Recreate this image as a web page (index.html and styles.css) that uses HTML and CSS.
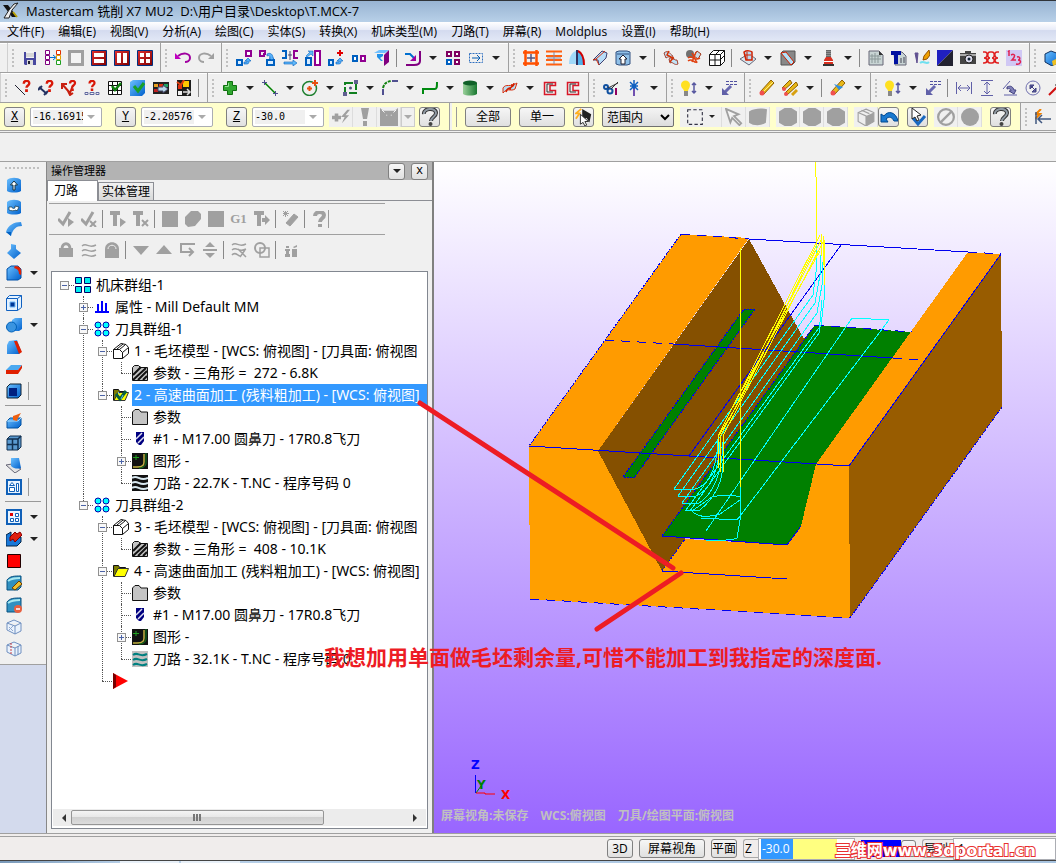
FILE: index.html
```html
<!DOCTYPE html>
<html lang="zh-CN">
<head>
    <meta charset="UTF-8">
    <meta name="viewport" content="width=device-width, initial-scale=1.0">
    <title>Mastercam 铣削 X7 MU2</title>
    <link rel="stylesheet" href="styles.css">
</head>
<body>
    <!-- Icon sprite, 16x16 grid -->
    <svg class="sprite" aria-hidden="true">
        <defs>
            <linearGradient id="g-blue" x1="0" y1="0" x2="1" y2="1"><stop offset="0" stop-color="#6cc0ff"/><stop offset="1" stop-color="#0060cc"/></linearGradient>
            <linearGradient id="g-green" x1="0" x2="1"><stop offset="0" stop-color="#9ad09a"/><stop offset="1" stop-color="#187830"/></linearGradient>
            <linearGradient id="g-red" x1="0" y1="0" x2="1" y2="1"><stop offset="0" stop-color="#e03030"/><stop offset="1" stop-color="#800000"/></linearGradient>
        </defs>
        <symbol id="app" viewBox="0 0 18 18"><path d="M1 3h5l9 12h-5z" fill="#111"/><path d="M16 1l-6 7-3 8H2l5-8 5-6z" fill="#eee" stroke="#222"/><path d="M11 10l4 5" stroke="#b8a000" stroke-width="2"/></symbol>
        <symbol id="save" viewBox="0 0 16 16"><path d="M2 2h12v13H3l-1-1z" fill="#4848a0"/><path d="M4 1h8v7H4z" fill="#f4f4f4"/><path d="M4 4h8M4 6h8" stroke="#bbb"/><path d="M5 10h6v5H5z" fill="#ddd"/><path d="M6 11h2v3H6z" fill="#223"/></symbol>
        <symbol id="map" viewBox="0 0 16 16"><path d="M.5.5h4v4h-4zM.5 5.500h4v4h-4zM.5 10.500h4v4h-4z" fill="#fff" stroke="#800080"/><path d="M11.500.5h4v4h-4z" fill="#fff" stroke="#e03000"/><path d="M11.500 5.500h4v4h-4z" fill="#fff" stroke="#e0a000"/><path d="M11.500 10.500h4v4h-4z" fill="#fff" stroke="#20a020"/><path d="M5 7.500h5M8 5l3 2.500L8 10" fill="none" stroke="#0070d0"/></symbol>
        <symbol id="win0" viewBox="0 0 16 16"><path d="M1.500 1.500h13v13h-13z" fill="#f4f4f4" stroke="#a0a0a0" stroke-width="3"/></symbol>
        <symbol id="win1" viewBox="0 0 16 16"><path d="M.5.5h15v15H.5z" fill="url(#g-red)" stroke="#003080"/><path d="M3 3h10v4H3zM3 9h10v4H3z" fill="#fff"/></symbol>
        <symbol id="win2" viewBox="0 0 16 16"><path d="M.5.5h15v15H.5z" fill="url(#g-red)" stroke="#003080"/><path d="M3 3h4v10H3zM9 3h4v10H9z" fill="#fff"/></symbol>
        <symbol id="win4" viewBox="0 0 16 16"><path d="M.5.5h15v15H.5z" fill="url(#g-red)" stroke="#003080"/><path d="M3 3h4v4H3zM9 3h4v4H9zM3 9h4v4H3zM9 9h4v4H9z" fill="#fff"/></symbol>
        <symbol id="undo" viewBox="0 0 16 16"><path d="M3 6c5-4 12-3 12 2 0 3-3 4-5 4" fill="none" stroke="#a000a0" stroke-width="2"/><path d="M0 3v6h6z" fill="#c000c0"/></symbol>
        <symbol id="redo" viewBox="0 0 16 16"><path d="M13 6C8 2 1 3 1 8c0 3 3 4 5 4" fill="none" stroke="#a0a0a0" stroke-width="2"/><path d="M16 3v6h-6z" fill="#a0a0a0"/></symbol>
        <symbol id="x-move" viewBox="0 0 16 16"><path d="M1 10h5v5H1z" fill="#d8ecff" stroke="#0060c0" stroke-width="2"/><path d="M10 1h5v5h-5z" fill="#fff" stroke="#900090" stroke-width="2"/><path d="M8 14h3c2 0 2-2 2-3h2l-3-3-3 3h2v1H8z" fill="#58b0f8" stroke="#0060c0" stroke-width=".6"/></symbol>
        <symbol id="x-copy" viewBox="0 0 16 16"><path d="M6 6H1V1h5v3H4" fill="none" stroke="#900090" stroke-width="2"/><path d="M8 10h7v5H8z" fill="#d8ecff" stroke="#0060c0" stroke-width="2"/><path d="M8 4c4-2 6 1 6 4h1l-2 2-3-2h1c0-2-1-3-3-2z" fill="#58b0f8" stroke="#0060c0" stroke-width=".6"/></symbol>
        <symbol id="x-mirror" viewBox="0 0 16 16"><path d="M0 1h4v7H0" fill="none" stroke="#0060c0" stroke-width="2"/><path d="M16 1h-4v7h4" fill="none" stroke="#900090" stroke-width="2"/><path d="M8 1v9M6 5h4" stroke="#446"/><path d="M2 12h9v-2l4 3-4 3v-2H2z" fill="#60b8f8" stroke="#0060c0" stroke-width=".6"/></symbol>
        <symbol id="x-scale" viewBox="0 0 16 16"><path d="M1 8h5v7H1z" fill="#d8ecff" stroke="#0060c0" stroke-width="2"/><path d="M10 1h5v14h-5z" fill="#fff" stroke="#900090" stroke-width="2"/><path d="M1 6l4-4-2-1h5v5L6 4 2 7z" fill="#60b8f8" stroke="#0060c0" stroke-width=".5"/></symbol>
        <symbol id="x-off" viewBox="0 0 16 16"><path d="M1 10h4v5H1z" fill="#d8ecff" stroke="#0060c0" stroke-width="2"/><path d="M12 0v6M9 3h6" stroke="#e00000" stroke-width="2"/><path d="M8 14h3c2 0 2-2 2-3h2l-3-3-3 3h2v1H8z" fill="#58b0f8" stroke="#0060c0" stroke-width=".6"/></symbol>
        <symbol id="x-two" viewBox="0 0 16 16"><path d="M2 6h4v5H2z" fill="#fff" stroke="#0060c0" stroke-width="2"/><path d="M10 6h4v5h-4z" fill="#fff" stroke="#900090" stroke-width="2"/></symbol>
        <symbol id="x-proj" viewBox="0 0 16 16"><path d="M0 3l5-3h10l-4 3z" fill="#70c0ff"/><path d="M10 5l5-5v12l-5 4z" fill="#800080"/><path d="M3 4h6v2L6 8l3 3H7L3 7z" fill="#2090e8"/></symbol>
        <symbol id="x-roll" viewBox="0 0 16 16"><path d="M15 1v10c0 4-4 4-6 4H1" fill="none" stroke="#800080" stroke-width="2"/><path d="M0 4h5l5 5" fill="none" stroke="#0070d0" stroke-width="2"/><path d="M11 5v6H5z" fill="#a000a0"/></symbol>
        <symbol id="x-array" viewBox="0 0 16 16"><path d="M2 2h4v4H2zM10 2h4v4h-4zM10 10h4v4h-4z" fill="#fff" stroke="#800060" stroke-width="2"/><path d="M2 10h4v4H2z" fill="#fff" stroke="#0060c0" stroke-width="2"/></symbol>
        <symbol id="x-drag" viewBox="0 0 16 16"><path d="M1.500 3.500h13v9h-13z" fill="none" stroke="#3070c0" stroke-dasharray="2 1"/><path d="M4 8h8M9 5l3 3-3 3" fill="none" stroke="#0058b0"/></symbol>
        <symbol id="grid-o" viewBox="0 0 16 16"><path d="M2.500 0v16M13.500 0v16M0 2.500h16M0 13.500h16" stroke="#ff5000" stroke-width="2.500"/><path d="M8 4v8M4 8h8" stroke="#555580" stroke-width="1.500"/></symbol>
        <symbol id="rows-o" viewBox="0 0 16 16"><path d="M0 1.500h16M0 6h16M0 10h16M0 14.500h16" stroke="#ff6010" stroke-width="2"/><path d="M8 2v12M1 8h14" stroke="#8888a0"/></symbol>
        <symbol id="revolve" viewBox="0 0 16 16"><path d="M7 1v13H0C0 7 3 2 7 1z" fill="#a0d8f8"/><path d="M9 1c4 2 6 7 6 14H9z" fill="#50b0e8"/><path d="M9 1c4 2 6 7 6 14" fill="none" stroke="#d00000" stroke-width="2"/><path d="M8 0v15" stroke="#303060" stroke-width="2"/></symbol>
        <symbol id="sweep" viewBox="0 0 16 16"><path d="M1 10L10 1l5 2-1 5-7 7-1-5z" fill="#b8ddf8" stroke="#404070"/><path d="M1 10l3-1 3 6M4 9l9-8" fill="none" stroke="#d03010"/></symbol>
        <symbol id="draft" viewBox="0 0 16 16"><path d="M1 2l3-1h8l3 1v12l-3 1H4l-3-1z" fill="#90c0e8" stroke="#305080"/><path d="M2 4h12" stroke="#305080"/><path d="M6 14V9H4l4-4 4 4h-2v5z" fill="#fff" stroke="#223"/></symbol>
        <symbol id="flow" viewBox="0 0 16 16"><path d="M1 3c5-4 6 2 8 2l2 4c-3 0-4-4-8-1zM6 9c4-3 5 2 8 1l1 4c-4 2-5-3-8-1z" fill="#c0e4f8" stroke="#a04030"/><path d="M6 1l-2 4 6 3-3 4" fill="none" stroke="#d83000" stroke-width="1.500"/></symbol>
        <symbol id="flow2" viewBox="0 0 16 16"><circle cx="4" cy="4" r="4" fill="#707070"/><path d="M11 1l4 3-3 5-4-3z" fill="#c8dce8" stroke="#a03010"/><path d="M2 8c5-4 5 4 12 0M2 11c5-4 6 4 9 0M6 3l5 10M10 2l-4 10" fill="none" stroke="#e04010" stroke-width="1.500"/></symbol>
        <symbol id="wirebox" viewBox="0 0 16 16"><path d="M.5 4.500h11v11H.5zM.5 4.500l4-4h11v11l-4 4M11.500 4.500l4-4M6 5v10M1 10h10M6 5l4-4M11 10l4-4" fill="#fff" stroke="#111"/></symbol>
        <symbol id="trim" viewBox="0 0 16 16"><path d="M0 9l5-3h7l4 3-7 6z" fill="#d8e8f0" stroke="#667"/><path d="M4 2c3-2 7-1 8 0v8H6z" fill="#b8d8f0" stroke="#d02000" stroke-width="1.500"/><path d="M5 5h6M7 2v8" stroke="#d02000"/></symbol>
        <symbol id="slice" viewBox="0 0 16 16"><path d="M1 3l2-2h12v11l-3 3H1z" fill="#888" stroke="#555"/><path d="M1 3l5-1 8 10-3 3z" fill="#b0e0f8" stroke="#d02000"/></symbol>
        <symbol id="tower" viewBox="0 0 16 16"><path d="M6 0h5v7H6z" fill="#666"/><path d="M6 1.500h5M6 3.500h5M6 5.500h5" stroke="#bbb" stroke-width=".5"/><path d="M6 7h5l2 3v5H4v-5z" fill="#d83020"/><path d="M4 11.500h9" stroke="#fff"/><path d="M3 15h11" stroke="#333" stroke-width="2"/></symbol>
        <symbol id="doc" viewBox="0 0 16 16"><path d="M1 1h10l4 4v10H1z" fill="#c8d4d4" stroke="#667"/><path d="M4 4v9M7 3v10M10 5v8M2 6h11M2 9h11" stroke="#8a9898"/><path d="M11 1v4h4z" fill="#333"/></symbol>
        <symbol id="doc-t" viewBox="0 0 16 16"><path d="M3 2h8l4 4v9H4z" fill="#c8d4d4" stroke="#667"/><path d="M0 1h10v4H7v9H3V5H0z" fill="#0010a0"/><path d="M10 8v5M13 7v6" stroke="#445"/></symbol>
        <symbol id="pens" viewBox="0 0 16 16"><path d="M1 3h3l-1 10z" fill="#605090" stroke="#605090"/><path d="M15 0l-5 6-1 4 4-1 3-4z" fill="#f0a000" stroke="#905000"/><path d="M6 13c4-3 6 2 9-1" fill="none" stroke="#70e0f0" stroke-width="2"/></symbol>
        <symbol id="shade" viewBox="0 0 16 16"><path d="M0 0h16L0 16z" fill="#2020c0"/><path d="M16 0v16H0z" fill="#222230"/></symbol>
        <symbol id="camera" viewBox="0 0 16 16"><path d="M0 3h5V1h6v2h5v11H0z" fill="#444"/><path d="M0 4h16v2H0z" fill="#aaa"/><circle cx="9" cy="9" r="4" fill="#dde" stroke="#222"/><circle cx="9" cy="9" r="1.500" fill="#123"/></symbol>
        <symbol id="coils" viewBox="0 0 16 16"><path d="M0 2h2c3 0 3 6-1 6 4 0 4 5 0 5H0M7 2C4 2 4 8 7 8c-3 0-3 5 0 5h2c3 0 3-5 0-5 3 0 3-6 0-6zM16 2h-2c-3 0-3 6 1 6-4 0-4 5 0 5h1" fill="none" stroke="#e02020" stroke-width="1.500"/></symbol>
        <symbol id="nums" viewBox="0 0 16 16"><path d="M0 0h16v16H0z" fill="#d0c8f4"/><path d="M2 2l1-1v5M5 5c4-2 5 1 1 5h4M11 7c4-1 3 3 1 3 4 0 3 5-2 4" fill="none" stroke="#e02050" stroke-width="1.500"/></symbol>
        <symbol id="cube-b" viewBox="0 0 16 16"><path d="M1 4l6-3 8 3v8l-7 4-7-4z" fill="url(#g-blue)" stroke="#103060"/><path d="M8 11l6-3 2 4-7 4z" fill="#f0c020"/></symbol>

        <symbol id="q" viewBox="0 0 9 13"><path d="M1.500 4C1.500 0 7.500 0 7.500 3.500 7.500 6 4.500 6 4.500 8.500" fill="none" stroke="#d81808" stroke-width="2.600"/><path d="M3 10h3v3H3z" fill="#d81808"/></symbol>
        <symbol id="a-line" viewBox="0 0 16 16"><path d="M0 5l10 10" stroke="#223"/><use href="#q" x="7" width="9" height="12"/></symbol>
        <symbol id="a-dist" viewBox="0 0 16 16"><path d="M1 7l8 7M0 10l4-4M6 15l4-4" stroke="#223060" stroke-width="2"/><use href="#q" x="7" width="9" height="12"/></symbol>
        <symbol id="a-ang" viewBox="0 0 16 16"><path d="M1 4l8 9 3-8M1 9V4h5M7 11l2 4 3-2" fill="none" stroke="#c82010" stroke-width="2"/><use href="#q" x="7" width="9" height="11"/></symbol>
        <symbol id="a-chain" viewBox="0 0 16 16"><use href="#q" x="4" width="8" height="11"/><path d="M1 12.500h3v2H1zM6 12.500h4v2H6zM12 12.500h3v2h-3z" fill="none" stroke="#6068a0"/></symbol>
        <symbol id="a-grid" viewBox="0 0 16 16"><path d="M1.500 1.500h13v13h-13z" fill="#fff" stroke="#111"/><path d="M1 5.500h14M1 10.500h14M5.500 1v14M10.500 1v14" stroke="#111"/><path d="M5 6l3 4 6-7" fill="none" stroke="#108010" stroke-width="2.500"/></symbol>
        <symbol id="a-check" viewBox="0 0 16 16"><path d="M0 2l3-2h12v13l-3 3H0z" fill="url(#g-blue)"/><path d="M4 6l4 5 6-8" fill="none" stroke="#18a028" stroke-width="3"/></symbol>
        <symbol id="a-list" viewBox="0 0 16 16"><path d="M0 2h16v12H0z" fill="#222"/><path d="M1 4h4v3H1z" fill="#e8a020"/><path d="M6 4h4v3H6z" fill="#e03010"/><path d="M11 4h4v3h-4z" fill="#20a060"/><path d="M1 9h4v3H1z" fill="#c02020"/><path d="M5 7h5V5l5 4-5 4v-2H5z" fill="#b8d8e8" stroke="#446"/></symbol>
        <symbol id="a-sort" viewBox="0 0 16 16"><path d="M1 0h14v16H1z" fill="#1c1c1c"/><path d="M2 5h4v4H2z" fill="#e03010"/><path d="M7 1h6v6H7z" fill="#ffc800"/><path d="M2 11h4v4H2z" fill="#f0f0f0"/><path d="M1 2l4 3 3-5" fill="none" stroke="#e04010" stroke-width="2"/><path d="M7 12h6M11 9l3 3-3 3" fill="none" stroke="#ddd" stroke-width="1.500"/></symbol>
        <symbol id="point" viewBox="0 0 16 16"><path d="M5.500 1.500h5v4h4v5h-4v4h-5v-4h-4v-5h4z" fill="#30a830" stroke="#107010"/><path d="M6.500 3v3.500H3" fill="none" stroke="#90e090"/></symbol>
        <symbol id="line" viewBox="0 0 16 16"><path d="M3 3l10 10" stroke="#008000" stroke-width="1.500"/><path d="M0 2.500h5M2.500 0v5M11 13.500h5M13.500 11v5" stroke="#505090"/></symbol>
        <symbol id="circle" viewBox="0 0 16 16"><circle cx="7.500" cy="8.500" r="7" fill="none" stroke="#208030" stroke-width="1.500"/><path d="M7.500 6v5M5 8.500h5M13 0v6M10 3h6" stroke="#e85010" stroke-width="2"/></symbol>
        <symbol id="rect" viewBox="0 0 16 16"><path d="M3 3h11v10H3z" fill="none" stroke="#108020" stroke-width="2" stroke-dasharray="8 2"/><circle cx="8.500" cy="8" r="1.500" fill="#505080"/><path d="M12 0h4v4h-4zM1 12h4v4H1z" fill="#606090"/></symbol>
        <symbol id="fillet" viewBox="0 0 16 16"><path d="M1 15V9" stroke="#505090" stroke-width="2"/><path d="M1 8c1-4 3-6 8-7" fill="none" stroke="#108010" stroke-width="2" stroke-dasharray="3 1"/><path d="M10 1h6" stroke="#505090" stroke-width="2"/></symbol>
        <symbol id="spline" viewBox="0 0 16 16"><path d="M1 14V9h12c2 0 2-2 2-7" fill="none" stroke="#008a10" stroke-width="2"/></symbol>
        <symbol id="cyl" viewBox="0 0 16 16"><path d="M1 3h14v11c-3 2-11 2-14 0z" fill="url(#g-green)"/><ellipse cx="8" cy="3" rx="7" ry="2.500" fill="#106028"/></symbol>
        <symbol id="surf" viewBox="0 0 16 16"><path d="M1 8c3-5 7 0 14-5l-2 6c-5 3-7-2-12 4z" fill="#b8ddf0" stroke="#d83010"/><path d="M4 12c2-7 6-1 6-8M8 10c0-5 4-2 4-7" fill="none" stroke="#d02000" stroke-width="1.500"/></symbol>
        <symbol id="toolc" viewBox="0 0 16 16"><path d="M2.500 2.500h11v3H8v5h5.500v4h-11z" fill="#eee" stroke="#d81828" stroke-width="1.500"/><path d="M11 4H5v8h6" fill="none" stroke="#333"/></symbol>
        <symbol id="dyn" viewBox="0 0 16 16"><circle cx="3" cy="7" r="2" fill="none" stroke="#1050a0" stroke-width="2"/><circle cx="7" cy="11" r="2.500" fill="none" stroke="#1050a0" stroke-width="2"/><path d="M5 8l10-5M8 9l7-7" stroke="#333"/><path d="M13 8v7" stroke="#900060" stroke-width="2"/></symbol>
        <symbol id="axis" viewBox="0 0 16 16"><path d="M8 8v8" stroke="#7050b0" stroke-width="2"/><path d="M8 0v9M4 2l8 8M12 2l-8 8M4 6h8" stroke="#1060c0" stroke-width="1.500"/></symbol>
        <symbol id="bulb" viewBox="0 0 16 16"><path d="M0 5c0-6 9-6 9 0 0 3-2 4-2 6H3c0-2-3-3-3-6z" fill="#ffe020"/><path d="M3 11h4v5H3z" fill="#888"/><path d="M13 3v10M11 5l2-2 2 2M11 11l2 2 2-2" fill="none" stroke="#5858a0" stroke-width="1.500"/></symbol>
        <symbol id="attr" viewBox="0 0 16 16"><path d="M5 1.500h11M5 4.500h11" stroke="#5050a0" stroke-dasharray="3 1"/><path d="M10 6l-6 6" stroke="#6868b0" stroke-width="3"/><path d="M1 8v7h7z" fill="#6060a8"/></symbol>
        <symbol id="pencil" viewBox="0 0 16 16"><path d="M2 11L12 0l3 3L5 14z" fill="#e8b818" stroke="#906000"/><path d="M4 12L14 2" stroke="#fff080"/><circle cx="3" cy="13" r="2.500" fill="#f05050"/></symbol>
        <symbol id="pencils" viewBox="0 0 16 16"><path d="M0 8L8 0l2 3-8 7zM3 13L14 2l2 3L5 15z" fill="#e8b818" stroke="#906000"/><circle cx="2" cy="9" r="2" fill="#f05050"/><circle cx="4" cy="14" r="2" fill="#f05050"/><path d="M10 15l5-5" stroke="#d8a010" stroke-width="3"/></symbol>
        <symbol id="pencil-b" viewBox="0 0 16 16"><path d="M2 11L12 0l3 3L5 14z" fill="#e8b818" stroke="#906000"/><path d="M4 4l9 3-4 3z" fill="#3090e0"/><circle cx="3" cy="13" r="2.500" fill="#f05050"/></symbol>
        <symbol id="dim-h" viewBox="0 0 16 16"><path d="M.5 2v12M15.500 2v12M2 8h12M5 5L2 8l3 3M11 5l3 3-3 3" fill="none" stroke="#6060a8"/></symbol>
        <symbol id="dim-v" viewBox="0 0 16 16"><path d="M2 .5h12M2 15.500h12M8 2v12M5 5l3-3 3 3M5 11l3 3 3-3" fill="none" stroke="#6060a8"/></symbol>
        <symbol id="dim-a" viewBox="0 0 16 16"><path d="M1 9l7-8M2 15h13" stroke="#6060a8"/><path d="M5 7c4-2 6 0 7 3h2l-2 4-5-3h2c0-2-2-3-4-2z" fill="#8080b8" stroke="#404080"/></symbol>
        <symbol id="dim-c" viewBox="0 0 16 16"><circle cx="8" cy="8" r="7" fill="none" stroke="#7070b0"/><path d="M5 5h4L5 9zM11 12H7l4-4zM6 6l5 5" fill="#6060a0" stroke="#404080"/></symbol>
        <symbol id="dim-p" viewBox="0 0 16 16"><path d="M1 15L10 6" stroke="#d01010" stroke-width="2"/><path d="M11 1v8M7 5h8" stroke="#222"/></symbol>

        <symbol id="plusbolt" viewBox="0 0 20 16"><path d="M5 4v9M0 8.500h10" stroke="#a0a0a0" stroke-width="4"/><path d="M17 0l-7 8h4l-3 7 8-9h-4l5-6z" fill="#a0a0a0"/></symbol>
        <symbol id="bang" viewBox="0 0 16 18"><path d="M4 0h8l-2 11H6zM6 13h4v5H6z" fill="#a0a0a0"/></symbol>
        <symbol id="face" viewBox="0 0 20 20"><path d="M0 0l4 3h12l4-3v20H0z" fill="#a0a0a0"/><path d="M7 8h1M12 8h1M2 2l3 3M18 2l-3 3" stroke="#fff"/></symbol>
        <symbol id="help" viewBox="0 0 16 18"><path d="M2 6C1 0 14-1 14 5c0 4-5 4-5 8" fill="none" stroke="#333" stroke-width="4"/><path d="M2 6C1 0 14-1 14 5c0 4-5 4-5 8" fill="none" stroke="#909aa4" stroke-width="2"/><circle cx="8.500" cy="16" r="2" fill="#444"/></symbol>
        <symbol id="pick" viewBox="0 0 20 18"><path d="M8 0l10 6-2 9-3-5-5 2z" fill="#222"/><path d="M7 0L1 5h4L1 11" fill="none" stroke="#ffb020" stroke-width="2"/><path d="M6 6l9 8h-4l2 4-2 1-2-4-3 2z" fill="#fff" stroke="#222"/></symbol>
        <symbol id="marq" viewBox="0 0 16 16"><path d="M1.500 1.500h13v13h-13z" fill="none" stroke="#334" stroke-dasharray="3 2"/></symbol>
        <symbol id="arrow-g" viewBox="0 0 20 18"><path d="M1 0l14 6-5 2 8 8-2 2-8-8-2 5z" fill="#f4f4f4" stroke="#a0a0a0" stroke-width="2"/></symbol>
        <symbol id="blob" viewBox="0 0 16 16"><path d="M0 3c5-3 11-3 16-2l-1 12c-4 3-11 3-15 0z" fill="#a0a0a0"/></symbol>
        <symbol id="hex" viewBox="0 0 16 16"><path d="M5 0h6l5 3v10l-5 3H5l-5-3V3z" fill="#a0a0a0"/></symbol>
        <symbol id="cube-g" viewBox="0 0 16 16"><path d="M8 1l7 3v8l-7 4-7-4V4z" fill="#eee" stroke="#a0a0a0"/><path d="M8 7l7-3v8l-7 4z" fill="#a0a0a0"/><path d="M1 4l7 3v9M4 2l7 3" fill="none" stroke="#a0a0a0"/></symbol>
        <symbol id="turn" viewBox="0 0 18 16"><path d="M1 5v8h7l-2-3c3-3 6-2 8 2h4C16 3 8 1 4 7z" fill="#1878d0" stroke="#004890"/></symbol>
        <symbol id="verify" viewBox="0 0 18 18"><path d="M4 10l5 6 7-8" fill="none" stroke="#1868c0" stroke-width="3"/><path d="M3 0l9 7-4 1 2 4-2 1-2-4-3 2z" fill="#fff" stroke="#222"/></symbol>
        <symbol id="ban" viewBox="0 0 16 16"><circle cx="8" cy="8" r="7" fill="none" stroke="#a0a0a0" stroke-width="2"/><path d="M3 13L13 3" stroke="#a0a0a0" stroke-width="2"/></symbol>
        <symbol id="disc" viewBox="0 0 18 18"><circle cx="9" cy="9" r="9" fill="#a0a0a0"/></symbol>
        <symbol id="bolt-dim" viewBox="0 0 16 16"><path d="M6 0L1 5h4L0 10" fill="none" stroke="#f08000" stroke-width="2"/><path d="M1 3v12M3 10h13M7 6l-4 4 4 4" fill="none" stroke="#405880" stroke-width="1.500"/></symbol>

        <symbol id="s-ext" viewBox="0 0 16 16"><path d="M1 3c3-3 11-3 14 0v11c-3 2-11 2-14 0z" fill="url(#g-blue)"/><path d="M7 13V8H4.500L8 4l3.500 4H9v5z" fill="#fff" stroke="#134"/></symbol>
        <symbol id="s-rev" viewBox="0 0 16 16"><path d="M1 3c3-3 11-3 14 0v11c-3 2-11 2-14 0z" fill="url(#g-blue)"/><path d="M3 8v3c2 1 5 1 7 0l1 1 2-4-4-1v2c-2 1-3 0-3-1z" fill="#fff" stroke="#134" stroke-width=".7"/></symbol>
        <symbol id="s-swp" viewBox="0 0 16 16"><path d="M0 11C2 4 8 1 15 1l1 4C10 5 7 8 5 15z" fill="url(#g-blue)"/><path d="M0 11h5v4z" fill="#0060c0"/></symbol>
        <symbol id="s-loft" viewBox="0 0 16 16"><path d="M5 1l5 1v4l5 4-7 6-7-6 4-4z" fill="url(#g-blue)"/></symbol>
        <symbol id="s-fil" viewBox="0 0 16 16"><path d="M1 4l4-3h7l3 3v9l-3 2H1z" fill="url(#g-blue)" stroke="#0050a8"/><path d="M9 1c5 0 7 3 6 9l-2-1c0-3-1-5-5-6z" fill="#e02000"/></symbol>
        <symbol id="s-shell" viewBox="0 0 16 16"><path d="M.5 3.500h11v12H.5zM.5 3.500l3-3h12v12l-4 3M11.500 3.500l4-3" fill="#e4f2ff" stroke="#1060c0"/><path d="M4 7h5v5H4z" fill="#003898" stroke="#70b8f8"/></symbol>
        <symbol id="s-bool" viewBox="0 0 16 16"><path d="M6 3l3-2h7v11l-3 2H6z" fill="url(#g-blue)"/><circle cx="5.500" cy="10" r="5" fill="#3a94e0" stroke="#0060b8"/></symbol>
        <symbol id="s-draft" viewBox="0 0 16 16"><path d="M3 2l8-1 4 11-2 3H1V6z" fill="url(#g-blue)"/><path d="M8 2h3l5 11-3 2z" fill="#e02000"/></symbol>
        <symbol id="s-thick" viewBox="0 0 16 16"><path d="M5 4h11l-4 5H0z" fill="#4aa8f0"/><path d="M0 9h12l4-5v3l-4 6H0z" fill="#e02000"/></symbol>
        <symbol id="s-solid" viewBox="0 0 16 16"><path d="M1 4l3-3h11v11l-3 3H1z" fill="url(#g-blue)" stroke="#123"/><path d="M3 5h8v8H3z" fill="#002080"/></symbol>
        <symbol id="s-imp" viewBox="0 0 16 16"><path d="M1 8l3-3h11v7l-3 3H1z" fill="url(#g-blue)" stroke="#0050a0"/><path d="M1 8h11l3-3" fill="none" stroke="#a8dcff"/><path d="M7 7V3l3-1 5-2-3 5-1 3z" fill="#f06010"/></symbol>
        <symbol id="s-grid" viewBox="0 0 16 16"><path d="M1 4l3-3h11v11l-3 3H1z" fill="#5a9ad0" stroke="#123050"/><path d="M1 4h11v11M12 4l3-3M6.500 4v11M1 9.500h11" fill="none" stroke="#123050" stroke-width="1.500"/></symbol>
        <symbol id="s-bend" viewBox="0 0 16 16"><path d="M0 8l6-1 9 5-6 4z" fill="#e4e4e4" stroke="#667"/><path d="M5 1h8l2 10c-3 1-7 1-10-2z" fill="url(#g-blue)"/></symbol>
        <symbol id="s-lay" viewBox="0 0 16 16"><path d="M1 1h14v14H1z" fill="#e8f4ff" stroke="#1060b8" stroke-width="2"/><path d="M3.500 6.500l2.500-3 2.500 3zM3.500 8.500h5v4h-5zM10.500 4.500h2v8h-2z" fill="#fff" stroke="#1060b8"/></symbol>
        <symbol id="s-four" viewBox="0 0 16 16"><path d="M1 1h14v14H1z" fill="#e8f4ff" stroke="#1060b8" stroke-width="2"/><path d="M4 4h3v3H4z" fill="#e00000"/><path d="M9.500 4.500h3v3h-3zM4.500 9.500h3v3h-3zM9.500 9.500h3v3h-3z" fill="#fff" stroke="#1060b8"/></symbol>
        <symbol id="s-find" viewBox="0 0 16 16"><path d="M0 4l5-3v5h10v5l-4 4H0z" fill="#1878d8" stroke="#024"/><path d="M4 6l5-5 2 2 3-2 2 3-7 7-2-3-3 2z" fill="#e02010" stroke="#800"/></symbol>
        <symbol id="s-red" viewBox="0 0 16 16"><path d="M1.500 1.500h13v13h-13z" fill="#f00" stroke="#200"/></symbol>
        <symbol id="s-edit" viewBox="0 0 16 16"><path d="M1 5c3-4 7-4 14-4v11l-3 3H1z" fill="#3090c0" stroke="#065080"/><path d="M2 6c4-3 7-3 12-3" stroke="#a8e8f0" fill="none" stroke-width="2"/><path d="M6 13l7-7 3 3-7 6z" fill="#f0c030" stroke="#704000"/></symbol>
        <symbol id="s-del" viewBox="0 0 16 16"><path d="M1 5c3-4 7-4 14-4v11l-3 3H1z" fill="#3090c0" stroke="#065080"/><path d="M2 6c4-3 7-3 12-3" stroke="#a8e8f0" fill="none" stroke-width="2"/><circle cx="12" cy="12" r="4" fill="#e86040"/><path d="M10 12h4" stroke="#fff" stroke-width="1.500"/></symbol>
        <symbol id="s-wire" viewBox="0 0 16 16"><path d="M1 4l7-3 7 3v8l-6 3-8-4zM1 4l8 3 6-3M9 7v8" fill="#eaf2fc" stroke="#7090c0"/><path d="M3 8l4 4M3 11l4-4" stroke="#90a8d0"/></symbol>
        <symbol id="s-wire2" viewBox="0 0 16 16"><path d="M1 4l7-3 7 3v8l-6 3-8-4zM1 4l8 3 6-3M9 7v8M12 5v9" fill="#eaf2fc" stroke="#7090c0"/><path d="M5 2v12" stroke="#d04040" stroke-dasharray="2 1"/></symbol>

        <symbol id="p-selall" viewBox="0 0 16 16"><path d="M0 8l5 5 7-12" fill="none" stroke="currentColor" stroke-width="3"/><path d="M10 7l6 4-6 5z" fill="currentColor"/></symbol>
        <symbol id="p-selno" viewBox="0 0 16 16"><path d="M0 8l5 5 7-12" fill="none" stroke="currentColor" stroke-width="3"/><path d="M9 10l6 6M15 10l-6 6" stroke="currentColor" stroke-width="2"/></symbol>
        <symbol id="p-regen" viewBox="0 0 16 16"><path d="M0 0h10v4H7v11H3V4H0zM10 7l6 4-6 5z" fill="currentColor"/></symbol>
        <symbol id="p-regenx" viewBox="0 0 16 16"><path d="M0 0h10v4H7v11H3V4H0z" fill="currentColor"/><path d="M9 9l6 6M15 9l-6 6" stroke="currentColor" stroke-width="2"/></symbol>
        <symbol id="p-sq" viewBox="0 0 16 16"><path d="M0 0h16v16H0z" fill="currentColor"/></symbol>
        <symbol id="p-oct" viewBox="0 0 16 16"><path d="M6 0h7l3 3v5l-6 7-7 1-3-3V6z" fill="currentColor"/></symbol>
        <symbol id="p-post" viewBox="0 0 16 16"><path d="M0 0h10v4H7v11H3V4H0zM8 7h3V4l5 5-5 5v-3H8z" fill="currentColor"/></symbol>
        <symbol id="p-hf" viewBox="0 0 16 16"><path d="M3 12l8-9 4 3-8 9z" fill="currentColor" stroke="currentColor"/><path d="M0 5l5-5M0 0l5 5M2.500 0v6M0 2.500h6" stroke="currentColor"/></symbol>
        <symbol id="p-help" viewBox="0 0 16 16"><path d="M3 5C3 0 12 0 12 4c0 4-4 3-4 7" fill="none" stroke="currentColor" stroke-width="4"/><path d="M6 13h4v3H6z" fill="currentColor"/></symbol>
        <symbol id="p-lock" viewBox="0 0 16 16"><path d="M1 6h14v9H1z" fill="currentColor"/><path d="M4 7c0-7 8-7 8 0" fill="none" stroke="currentColor" stroke-width="3"/></symbol>
        <symbol id="p-wave" viewBox="0 0 16 16"><path d="M1 4c5-4 6 3 14-1M1 9c5-4 6 3 14-1M1 14c5-4 6 3 14-1" fill="none" stroke="currentColor" stroke-width="1.500"/></symbol>
        <symbol id="p-ghost" viewBox="0 0 16 16"><path d="M1 16V7c0-9 14-9 14 0v9z" fill="currentColor"/><path d="M4 7c0-5 8-5 8 0" fill="none" stroke="#eee"/></symbol>
        <symbol id="p-down" viewBox="0 0 16 16"><path d="M0 4h16l-8 9z" fill="currentColor"/></symbol>
        <symbol id="p-up" viewBox="0 0 16 16"><path d="M0 12h16L8 3z" fill="currentColor"/></symbol>
        <symbol id="p-ins" viewBox="0 0 16 16"><path d="M16 2H2v8h11M10 6l4 4-4 4" fill="none" stroke="currentColor" stroke-width="2"/></symbol>
        <symbol id="p-both" viewBox="0 0 16 16"><path d="M3 5l5-5 5 5zM3 11l5 5 5-5z" fill="currentColor"/><path d="M1 8h14" stroke="currentColor" stroke-width="2"/></symbol>
        <symbol id="p-wavex" viewBox="0 0 16 16"><path d="M1 3c5-4 6 3 14-1M1 8c5-4 6 3 14-1M1 13c3-4 6 1 8 1M7 7l8 8M14 8l-5 7" fill="none" stroke="currentColor" stroke-width="1.500"/></symbol>
        <symbol id="p-shape" viewBox="0 0 16 16"><circle cx="6" cy="6" r="5" fill="none" stroke="currentColor" stroke-width="2"/><path d="M6 6h9v9H6z" fill="none" stroke="currentColor" stroke-width="1.500"/></symbol>
        <symbol id="p-opt" viewBox="0 0 16 16"><path d="M3 7h4v2H6v3h1v3H2v-3h1V9H2V7zM9 7h5v8H9zM3 4h3v2H3zM10 5l4-2v2l-3 1z" fill="currentColor"/></symbol>

        <symbol id="t-machine" viewBox="0 0 16 16"><path d="M.5.5h6v6h-6zM9.500.5h6v6h-6zM.5 9.500h6v6h-6zM9.500 9.500h6v6h-6z" fill="#0ee" stroke="#006"/></symbol>
        <symbol id="t-prop" viewBox="0 0 16 16"><path d="M1 13h14M4 5v8M8 2v11M12 4v9" stroke="#00f" stroke-width="2"/></symbol>
        <symbol id="t-group" viewBox="0 0 16 16"><g fill="#0ff" stroke="#00a"><circle cx="4" cy="4" r="3"/><circle cx="12" cy="4" r="3"/><circle cx="4" cy="12" r="3"/><circle cx="12" cy="12" r="3"/></g></symbol>
        <symbol id="t-stock" viewBox="0 0 16 16"><path d="M.5 6.500L8 .5l5 1 2.500 3v6l-6 5H.5zM.5 6.500h6l3 3v6M6.500 6.500l6-5M9.500 9.500l6-5M4 6l6-5" fill="#fff" stroke="#111"/></symbol>
        <symbol id="t-hatch" viewBox="0 0 16 16"><path d="M.5 2.500l2-2h4l2 2h7v13H.5z" fill="#c4c4c4" stroke="#111"/><path d="M1 10l8-8M1 15L14 3M6 15l9-9M11 15l4-4" stroke="#111" stroke-width="2"/></symbol>
        <symbol id="t-folder" viewBox="0 0 16 16"><path d="M.5 13.500V2.500h5l1 2h6v3" fill="#7c7c00" stroke="#111"/><path d="M1 13.500L5 5.500h10.500L12 13.500z" fill="#ff0" stroke="#333"/></symbol>
        <symbol id="t-folderv" viewBox="0 0 16 16"><path d="M.5 13.500V2.500h5l1 2h6v3" fill="#7c7c00" stroke="#111"/><path d="M1 13.500L5 5.500h10.500L12 13.500z" fill="#ff0" stroke="#333"/><path d="M3 7l4 5 6-8" fill="none" stroke="#086040" stroke-width="3"/><path d="M5 5l2 2M10 8l-2 4" stroke="#60c0f0"/></symbol>
        <symbol id="t-param" viewBox="0 0 16 16"><path d="M.5 15.500V3L3 .5h4L9 3h6.500v12.500z" fill="#c4c4c4" stroke="#111"/></symbol>
        <symbol id="t-tool" viewBox="0 0 16 16"><path d="M4 1h8v9l-3 4H7l-3-3z" fill="#000080"/><path d="M4 8l6-6M6 12l6-6" stroke="#dde" stroke-width="1.500"/></symbol>
        <symbol id="t-geom" viewBox="0 0 16 16"><path d="M0 0h16v16H0z" fill="#111"/><path d="M12 1v8c0 3-1 5-7 5H1" fill="none" stroke="#c0b040" stroke-width="1.500"/><path d="M14 0v10c0 3-3 5-7 5" fill="none" stroke="#108020"/><path d="M4 2v5M1 4.500h6" stroke="#20a020"/></symbol>
        <symbol id="t-path" viewBox="0 0 16 16"><path d="M0 0h16v16H0z" fill="#111"/><path d="M0 3c6-4 7 4 16 0M0 8c6-4 7 4 16 0M0 13c6-4 7 4 16 0" fill="none" stroke="#d8e8f0" stroke-width="2"/></symbol>
        <symbol id="t-path2" viewBox="0 0 16 16"><path d="M0 0h16v16H0z" fill="#c0c0c0"/><path d="M1 4c5-4 6 3 14-1M1 9c5-4 6 3 14-1M1 14c5-4 6 3 14-1" fill="none" stroke="#008080" stroke-width="2"/></symbol>
        <symbol id="t-insert" viewBox="0 0 16 16"><path d="M0 0l15 8-15 8z" fill="#f00"/><path d="M0 0l3 2v12l-3 2z" fill="#700"/></symbol>
    </svg>

    <header class="title-bar">
        <svg class="app-icon"><use href="#app"/></svg>
        <h1>Mastercam 铣削 X7 MU2&nbsp; D:\用户目录\Desktop\T.MCX-7</h1>
    </header>

    <nav class="menu">
        <a href="#">文件(F)</a><a href="#">编辑(E)</a><a href="#">视图(V)</a><a href="#">分析(A)</a><a href="#">绘图(C)</a><a href="#">实体(S)</a><a href="#">转换(X)</a><a href="#">机床类型(M)</a><a href="#">刀路(T)</a><a href="#">屏幕(R)</a><a href="#">Moldplus</a><a href="#">设置(I)</a><a href="#">帮助(H)</a>
    </nav>

    <div class="toolbar first">
        <div class="group">
            <button class="tool" aria-label="保存"><svg><use href="#save"/></svg></button>
            <button class="tool" aria-label="映射"><svg><use href="#map"/></svg></button>
            <button class="tool" aria-label="单视窗"><svg><use href="#win0"/></svg></button>
            <button class="tool" aria-label="上下视窗"><svg><use href="#win1"/></svg></button>
            <button class="tool" aria-label="左右视窗"><svg><use href="#win2"/></svg></button>
            <button class="tool" aria-label="四视窗"><svg><use href="#win4"/></svg></button>
        </div>
        <div class="group">
            <button class="tool" aria-label="撤销"><svg><use href="#undo"/></svg></button>
            <button class="tool" aria-label="重做"><svg><use href="#redo"/></svg></button>
        </div>
        <div class="group">
            <button class="tool" aria-label="平移"><svg><use href="#x-move"/></svg></button>
            <button class="tool" aria-label="旋转"><svg><use href="#x-copy"/></svg></button>
            <button class="tool" aria-label="镜像"><svg><use href="#x-mirror"/></svg></button>
            <button class="tool" aria-label="比例"><svg><use href="#x-scale"/></svg></button>
            <button class="tool" aria-label="补正"><svg><use href="#x-off"/></svg></button>
            <button class="tool" aria-label="移动到原点"><svg><use href="#x-two"/></svg></button>
            <button class="tool" aria-label="投影"><svg><use href="#x-proj"/></svg></button>
            <span class="sep"></span>
            <button class="tool more" aria-label="缠绕"><svg><use href="#x-roll"/></svg></button>
            <button class="tool" aria-label="阵列"><svg><use href="#x-array"/></svg></button>
            <button class="tool more" aria-label="拖曳"><svg><use href="#x-drag"/></svg></button>
        </div>
        <div class="group">
            <button class="tool" aria-label="网格曲面"><svg><use href="#grid-o"/></svg></button>
            <button class="tool" aria-label="直纹曲面"><svg><use href="#rows-o"/></svg></button>
            <button class="tool" aria-label="旋转曲面"><svg><use href="#revolve"/></svg></button>
            <button class="tool" aria-label="扫描曲面"><svg><use href="#sweep"/></svg></button>
            <button class="tool more" aria-label="牵引曲面"><svg><use href="#draft"/></svg></button>
            <span class="sep"></span>
            <button class="tool" aria-label="曲面流线"><svg><use href="#flow"/></svg></button>
            <button class="tool" aria-label="曲面熔接"><svg><use href="#flow2"/></svg></button>
            <button class="tool" aria-label="边界盒"><svg><use href="#wirebox"/></svg></button>
            <span class="sep"></span>
            <button class="tool more" aria-label="修剪曲面"><svg><use href="#trim"/></svg></button>
            <button class="tool more" aria-label="曲面剖切"><svg><use href="#slice"/></svg></button>
            <button class="tool more" aria-label="曲面延伸"><svg><use href="#tower"/></svg></button>
            <span class="sep"></span>
            <button class="tool" aria-label="文件"><svg><use href="#doc"/></svg></button>
            <button class="tool" aria-label="文字"><svg><use href="#doc-t"/></svg></button>
            <button class="tool" aria-label="画笔"><svg><use href="#pens"/></svg></button>
            <button class="tool" aria-label="着色"><svg><use href="#shade"/></svg></button>
            <button class="tool" aria-label="截图"><svg><use href="#camera"/></svg></button>
            <button class="tool" aria-label="螺旋"><svg><use href="#coils"/></svg></button>
            <button class="tool" aria-label="编号"><svg><use href="#nums"/></svg></button>
        </div>
        <div class="group">
            <button class="tool" aria-label="实体"><svg><use href="#cube-b"/></svg></button>
        </div>
    </div>

    <div class="toolbar">
        <div class="group">
            <button class="tool" aria-label="分析图素"><svg><use href="#a-line"/></svg></button>
            <button class="tool" aria-label="分析距离"><svg><use href="#a-dist"/></svg></button>
            <button class="tool" aria-label="分析角度"><svg><use href="#a-ang"/></svg></button>
            <button class="tool" aria-label="分析串连"><svg><use href="#a-chain"/></svg></button>
            <button class="tool" aria-label="网格检查"><svg><use href="#a-grid"/></svg></button>
            <button class="tool" aria-label="实体检查"><svg><use href="#a-check"/></svg></button>
            <button class="tool" aria-label="属性表"><svg><use href="#a-list"/></svg></button>
            <button class="tool" aria-label="排序"><svg><use href="#a-sort"/></svg></button>
            <span class="sep"></span>
        </div>
        <div class="group">
            <button class="tool more" aria-label="点"><svg><use href="#point"/></svg></button>
            <button class="tool more" aria-label="线"><svg><use href="#line"/></svg></button>
            <button class="tool more" aria-label="圆弧"><svg><use href="#circle"/></svg></button>
            <button class="tool more" aria-label="矩形"><svg><use href="#rect"/></svg></button>
            <button class="tool more" aria-label="倒圆角"><svg><use href="#fillet"/></svg></button>
            <button class="tool more" aria-label="曲线"><svg><use href="#spline"/></svg></button>
            <button class="tool more" aria-label="圆柱"><svg><use href="#cyl"/></svg></button>
            <button class="tool more" aria-label="曲面"><svg><use href="#surf"/></svg></button>
            <button class="tool" aria-label="轮廓"><svg><use href="#toolc"/></svg></button>
            <button class="tool" aria-label="轮廓补正"><svg><use href="#toolc"/></svg></button>
        </div>
        <div class="group">
            <button class="tool" aria-label="动态修剪"><svg><use href="#dyn"/></svg></button>
            <button class="tool more" aria-label="打断"><svg><use href="#axis"/></svg></button>
        </div>
        <div class="group">
            <button class="tool more" aria-label="隐藏"><svg><use href="#bulb"/></svg></button>
            <button class="tool" aria-label="属性"><svg><use href="#attr"/></svg></button>
        </div>
        <div class="group">
            <button class="tool" aria-label="删除"><svg><use href="#pencil"/></svg></button>
            <button class="tool more" aria-label="删除重复"><svg><use href="#pencils"/></svg></button>
            <span class="sep"></span>
            <button class="tool more" aria-label="恢复删除"><svg><use href="#pencil-b"/></svg></button>
        </div>
        <div class="group">
            <button class="tool more" aria-label="显示"><svg><use href="#bulb"/></svg></button>
            <button class="tool" aria-label="标注属性"><svg><use href="#attr"/></svg></button>
            <span class="sep"></span>
            <button class="tool" aria-label="水平标注"><svg><use href="#dim-h"/></svg></button>
            <button class="tool" aria-label="垂直标注"><svg><use href="#dim-v"/></svg></button>
            <button class="tool" aria-label="角度标注"><svg><use href="#dim-a"/></svg></button>
            <button class="tool" aria-label="圆弧标注"><svg><use href="#dim-c"/></svg></button>
            <button class="tool" aria-label="点标注"><svg><use href="#dim-p"/></svg></button>
        </div>
    </div>

    <div class="ribbon">
        <div class="ribbon-part coords">
            <div class="coord">
                <button class="key">X</button>
                <div class="combo"><input type="text" aria-label="X" value="-16.16915"><button class="drop" aria-label="X 列表"></button></div>
            </div>
            <div class="coord">
                <button class="key">Y</button>
                <div class="combo"><input type="text" aria-label="Y" value="-2.20576"><button class="drop" aria-label="Y 列表"></button></div>
            </div>
            <div class="coord">
                <button class="key">Z</button>
                <div class="combo"><input type="text" aria-label="Z" value="-30.0"><button class="drop" aria-label="Z 列表"></button></div>
            </div>
            <div class="quick">
                <button class="flat" aria-label="快速点"><svg><use href="#plusbolt"/></svg></button>
                <button class="flat" aria-label="提示"><svg><use href="#bang"/></svg></button>
                <button class="flat" aria-label="抓取设置"><svg><use href="#face"/></svg></button>
                <button class="flat thin" aria-label="抓取列表"><span class="drop"></span></button>
                <button class="key" aria-label="帮助"><svg><use href="#help"/></svg></button>
            </div>
        </div>
        <div class="ribbon-part select">
            <button class="word">全部</button>
            <button class="word">单一</button>
            <button class="key" aria-label="选择"><svg><use href="#pick"/></svg></button>
            <select aria-label="范围"><option>范围内</option></select>
            <div class="quick">
                <button class="flat more" aria-label="窗选"><svg><use href="#marq"/></svg></button>
                <button class="flat" aria-label="箭头"><svg><use href="#arrow-g"/></svg></button>
                <button class="flat" aria-label="实体面"><svg><use href="#blob"/></svg></button>
            </div>
            <div class="quick">
                <button class="flat" aria-label="边界"><svg><use href="#hex"/></svg></button>
                <button class="flat" aria-label="面"><svg><use href="#hex"/></svg></button>
                <button class="flat" aria-label="主体"><svg><use href="#hex"/></svg></button>
            </div>
            <div class="quick">
                <button class="flat" aria-label="背面"><svg><use href="#cube-g"/></svg></button>
                <button class="key" aria-label="上次"><svg><use href="#turn"/></svg></button>
            </div>
            <button class="key" aria-label="验证"><svg><use href="#verify"/></svg></button>
            <div class="quick">
                <button class="flat" aria-label="取消"><svg><use href="#ban"/></svg></button>
                <button class="flat" aria-label="结束"><svg><use href="#disc"/></svg></button>
            </div>
            <button class="key" aria-label="选择帮助"><svg><use href="#help"/></svg></button>
        </div>
        <div class="group">
            <button class="tool" aria-label="快速标注"><svg><use href="#bolt-dim"/></svg></button>
        </div>
    </div>

    <div class="spacer-bar"></div>

    <main class="workspace">
        <aside class="side">
            <div class="side-tools">
                <button class="tool" aria-label="挤出"><svg><use href="#s-ext"/></svg></button>
                <button class="tool" aria-label="旋转"><svg><use href="#s-rev"/></svg></button>
                <button class="tool" aria-label="扫描"><svg><use href="#s-swp"/></svg></button>
                <button class="tool" aria-label="举升"><svg><use href="#s-loft"/></svg></button>
                <button class="tool more" aria-label="圆角"><svg><use href="#s-fil"/></svg></button>
                <hr>
                <button class="tool" aria-label="抽壳"><svg><use href="#s-shell"/></svg></button>
                <button class="tool more" aria-label="布尔"><svg><use href="#s-bool"/></svg></button>
                <button class="tool" aria-label="牵引"><svg><use href="#s-draft"/></svg></button>
                <button class="tool" aria-label="加厚"><svg><use href="#s-thick"/></svg></button>
                <button class="tool end" aria-label="由曲面生成"><svg><use href="#s-solid"/></svg></button>
                <hr>
                <button class="tool" aria-label="输入"><svg><use href="#s-imp"/></svg></button>
                <button class="tool" aria-label="网格"><svg><use href="#s-grid"/></svg></button>
                <button class="tool" aria-label="展开"><svg><use href="#s-bend"/></svg></button>
                <button class="tool end" aria-label="布局"><svg><use href="#s-lay"/></svg></button>
                <hr>
                <button class="tool more" aria-label="视图"><svg><use href="#s-four"/></svg></button>
                <button class="tool more" aria-label="查找特征"><svg><use href="#s-find"/></svg></button>
                <button class="tool" aria-label="颜色"><svg><use href="#s-red"/></svg></button>
                <button class="tool" aria-label="编辑"><svg><use href="#s-edit"/></svg></button>
                <button class="tool" aria-label="移除面"><svg><use href="#s-del"/></svg></button>
                <button class="tool" aria-label="线框"><svg><use href="#s-wire"/></svg></button>
                <button class="tool" aria-label="剖面"><svg><use href="#s-wire2"/></svg></button>
            </div>
        </aside>

        <section class="manager">
            <div class="manager-title">
                <h2>操作管理器</h2>
                <button class="mini" aria-label="菜单"><span class="drop dark"></span></button>
                <button class="mini">x</button>
            </div>
            <div class="tabs">
                <button class="tab active">刀路</button>
                <button class="tab">实体管理</button>
            </div>
            <div class="manager-tools">
                <div class="line">
                    <button class="tool" aria-label="选择全部"><svg><use href="#p-selall"/></svg></button>
                    <button class="tool" aria-label="取消选择"><svg><use href="#p-selno"/></svg></button>
                    <span class="sep"></span>
                    <button class="tool" aria-label="重新生成"><svg><use href="#p-regen"/></svg></button>
                    <button class="tool" aria-label="重新生成失效"><svg><use href="#p-regenx"/></svg></button>
                    <span class="sep"></span>
                    <button class="tool" aria-label="模拟"><svg><use href="#p-sq"/></svg></button>
                    <button class="tool" aria-label="验证"><svg><use href="#p-oct"/></svg></button>
                    <button class="tool" aria-label="机床模拟"><svg><use href="#p-sq"/></svg></button>
                    <button class="tool g1">G1</button>
                    <button class="tool" aria-label="高速进给"><svg><use href="#p-post"/></svg></button>
                    <span class="sep"></span>
                    <button class="tool" aria-label="删除全部"><svg><use href="#p-hf"/></svg></button>
                    <span class="sep"></span>
                    <button class="tool end" aria-label="帮助"><svg><use href="#p-help"/></svg></button>
                </div>
                <div class="line">
                    <button class="tool" aria-label="锁定"><svg><use href="#p-lock"/></svg></button>
                    <button class="tool" aria-label="显示刀路"><svg><use href="#p-wave"/></svg></button>
                    <button class="tool" aria-label="关闭后处理"><svg><use href="#p-ghost"/></svg></button>
                    <span class="sep"></span>
                    <button class="tool" aria-label="下移"><svg><use href="#p-down"/></svg></button>
                    <button class="tool" aria-label="上移"><svg><use href="#p-up"/></svg></button>
                    <button class="tool" aria-label="插入位置"><svg><use href="#p-ins"/></svg></button>
                    <button class="tool" aria-label="滚动"><svg><use href="#p-both"/></svg></button>
                    <span class="sep"></span>
                    <button class="tool" aria-label="单一显示"><svg><use href="#p-wavex"/></svg></button>
                    <button class="tool" aria-label="关联图形"><svg><use href="#p-shape"/></svg></button>
                    <span class="sep"></span>
                    <button class="tool" aria-label="选项"><svg><use href="#p-opt"/></svg></button>
                </div>
            </div>

            <div class="tree-box">
                <ul class="tree">
                    <li>
                        <div class="node"><button class="exp" aria-label="折叠"></button><svg><use href="#t-machine"/></svg><span>机床群组-1</span></div>
                        <ul>
                            <li><div class="node"><button class="exp plus" aria-label="展开"></button><svg><use href="#t-prop"/></svg><span>属性 - Mill Default MM</span></div></li>
                            <li>
                                <div class="node"><button class="exp" aria-label="折叠"></button><svg><use href="#t-group"/></svg><span>刀具群组-1</span></div>
                                <ul>
                                    <li>
                                        <div class="node"><button class="exp" aria-label="折叠"></button><svg><use href="#t-stock"/></svg><span>1 - 毛坯模型 - [WCS: 俯视图] - [刀具面: 俯视图</span></div>
                                        <ul>
                                            <li><div class="node"><svg><use href="#t-hatch"/></svg><span>参数 - 三角形 =&nbsp; 272 - 6.8K</span></div></li>
                                        </ul>
                                    </li>
                                    <li>
                                        <div class="node selected"><button class="exp" aria-label="折叠"></button><svg><use href="#t-folderv"/></svg><span>2 - 高速曲面加工 (残料粗加工) - [WCS: 俯视图]</span></div>
                                        <ul>
                                            <li><div class="node"><svg><use href="#t-param"/></svg><span>参数</span></div></li>
                                            <li><div class="node"><svg><use href="#t-tool"/></svg><span>#1 - M17.00 圆鼻刀 - 17R0.8飞刀</span></div></li>
                                            <li><div class="node"><button class="exp plus" aria-label="展开"></button><svg><use href="#t-geom"/></svg><span>图形 -</span></div></li>
                                            <li><div class="node"><svg><use href="#t-path"/></svg><span>刀路 - 22.7K - T.NC - 程序号码 0</span></div></li>
                                        </ul>
                                    </li>
                                </ul>
                            </li>
                            <li>
                                <div class="node"><button class="exp" aria-label="折叠"></button><svg><use href="#t-group"/></svg><span>刀具群组-2</span></div>
                                <ul>
                                    <li>
                                        <div class="node"><button class="exp" aria-label="折叠"></button><svg><use href="#t-stock"/></svg><span>3 - 毛坯模型 - [WCS: 俯视图] - [刀具面: 俯视图</span></div>
                                        <ul>
                                            <li><div class="node"><svg><use href="#t-hatch"/></svg><span>参数 - 三角形 =&nbsp; 408 - 10.1K</span></div></li>
                                        </ul>
                                    </li>
                                    <li>
                                        <div class="node"><button class="exp" aria-label="折叠"></button><svg><use href="#t-folder"/></svg><span>4 - 高速曲面加工 (残料粗加工) - [WCS: 俯视图]</span></div>
                                        <ul>
                                            <li><div class="node"><svg><use href="#t-param"/></svg><span>参数</span></div></li>
                                            <li><div class="node"><svg><use href="#t-tool"/></svg><span>#1 - M17.00 圆鼻刀 - 17R0.8飞刀</span></div></li>
                                            <li><div class="node"><button class="exp plus" aria-label="展开"></button><svg><use href="#t-geom"/></svg><span>图形 -</span></div></li>
                                            <li><div class="node"><svg><use href="#t-path2"/></svg><span>刀路 - 32.1K - T.NC - 程序号码 0</span></div></li>
                                        </ul>
                                    </li>
                                    <li><div class="node"><svg><use href="#t-insert"/></svg></div></li>
                                </ul>
                            </li>
                        </ul>
                    </li>
                </ul>
                <div class="scroll">
                    <button class="scroll-arrow left" aria-label="向左滚动"></button>
                    <div class="track"><div class="thumb"></div></div>
                    <button class="scroll-arrow right" aria-label="向右滚动"></button>
                </div>
            </div>
        </section>

        <section class="viewport">
            <!-- Part, stock wireframe and toolpath -->
            <svg class="scene" viewBox="434 162 622 670" preserveAspectRatio="xMinYMin meet" shape-rendering="crispEdges" role="img" aria-label="零件">
                <path d="M749 239L804 339L815 325L815 340L685 539L662 571L598 451z" fill="#855000"/>
                <path d="M815 325L912 332L816 464L801 526L787 545L662 536z" fill="#008000"/>
                <path d="M681 234L749 238L598 451L529 446z" fill="#ff9b00"/>
                <path d="M968 252L1001 254L849 466L816 464z" fill="#ff9b00"/>
                <path d="M1001 254L1002 407L850 618L849 466z" fill="#985c00"/>
                <path d="M529 446L598 451L662 571L685 539L787 545L801 526L816 464L849 466L850 618L530 599z" fill="#ff9f00"/>
                <path d="M744 309L755 309L634 478L623 477z" fill="#008000"/>
                <g fill="none" stroke="#0000f0">
                    <path d="M749 239L968 252M673 344L893 358M529 446L849 466L1001 254M662 571L787 579"/>
                    <path d="M681 234L749 239M968 252L1001 254M605 340L673 344M893 358L925 360M530 599L850 618M815 325L912 332" stroke-dasharray="9 7"/>
                    <path d="M681 234L529 446M755 309L634 478L623 477L744 309H755M815 325L662 536M662 571L685 539M850 618L1002 407" stroke-dasharray="2 1"/>
                    <path d="M841 245L689 456M662 536L787 545L801 526"/>
                </g>
                <g fill="none" stroke="#00ffff">
                    <path d="M816 245V272L813 295L674 489L690 490Q716 488 718 440"/>
                    <path d="M820 255V275L815 303L678 496L694 497Q718 488 720 442"/>
                    <path d="M822 262V285L817 313L682 503L698 504Q722 488 723 442"/>
                    <path d="M824 285V300L821 325L686 510L700 510Q724 490 723 460"/>
                    <path d="M822 300L819 333L690 511"/>
                    <path d="M706 531L852 318L889 320L737 520L701 518M740 487V520L737 538Q733 541 705 540"/>
                    <path d="M740 497Q728 493 712 497L692 511Q700 520 720 514L740 500"/>
                </g>
                <g fill="none" stroke="#ffff00">
                    <path d="M815.500 162V176L816.500 178V245M740.500 248V487"/>
                    <path d="M820 235L718 436V468M822 238L720 437V472M824 240L723 436V472M817 244L740 400L718 437M821 234V256M823 236V265M824.500 240V285M820 251L742 390"/>
                </g>
                <g shape-rendering="auto">
                    <path d="M475.500 775V793" stroke="#00f"/>
                    <path d="M476 793L481 786" stroke="#080"/>
                    <path d="M476 793H485V794H495" stroke="#f00" fill="none"/>
                    <text class="axis" x="471" y="769" fill="#00f">Z</text>
                    <text class="axis" x="477" y="789" fill="#008000">Y</text>
                    <text class="axis" x="501" y="799" fill="#f00">X</text>
                </g>
            </svg>
            <p class="view-info"><span>屏幕视角:未保存</span><span>WCS:俯视图</span><span>刀具/绘图平面:俯视图</span></p>
        </section>

        <!-- Markup drawn over the tree and the viewport -->
        <svg class="note" viewBox="0 162 1056 670" preserveAspectRatio="xMinYMin meet">
            <path d="M420 403L673 568M681 573L597 629" stroke="#ed1c24" stroke-width="5" stroke-linecap="round"/>
            <text x="324" y="665">我想加用单面做毛坯剩余量,可惜不能加工到我指定的深度面.</text>
        </svg>
    </main>

    <footer class="status">
        <button class="word">3D</button>
        <button class="word wide">屏幕视角</button>
        <button class="word">平面</button>
        <label class="depth" for="depth">Z</label>
        <input id="depth" type="text" value="-30.0">
        <button class="swatch" aria-label="颜色"></button>
        <button class="mini" aria-label="颜色列表"><span class="drop dark"></span></button>
        <label class="level" for="level">层别</label>
        <input id="level" type="text" value="1">
        <span class="watermark">三维网www.3dportal.cn</span>
    </footer>
    <div class="taskbar"><span></span><span></span></div>
</body>
</html>
```
FILE: styles.css
```css
:root {
    --face: #f0f0f0;
    --line: #a0a0a0;
    --ribbon: #ffffcc;
    --grey: #a0a0a0;
    --select: #3399ff;
    --ui: "Open Sans", "Noto Sans CJK SC", sans-serif;
}

* {
    margin: 0;
    padding: 0;
    box-sizing: border-box;
}

body {
    display: flex;
    flex-direction: column;
    height: 100vh;
    overflow: hidden;
    background: var(--face);
    color: #000;
    font: 12px/16px var(--ui);
}

button {
    border: none;
    background: none;
    font: inherit;
    color: inherit;
}

a {
    color: inherit;
    text-decoration: none;
}

.sprite {
    position: absolute;
    width: 0;
    height: 0;
}

/* Title and menu */
.title-bar {
    display: flex;
    align-items: center;
    flex: none;
    gap: 6px;
    height: 22px;
    padding: 0 0 2px 2px;
    border-top: 1px solid #303438;
    background: linear-gradient(#98b4d2, #b8d0e8);
}

.title-bar h1 {
    font-size: 13px;
    font-weight: normal;
    white-space: pre;
}

.app-icon {
    width: 18px;
    height: 18px;
}

.menu {
    display: flex;
    align-items: center;
    flex: none;
    gap: 14px;
    height: 19px;
    padding-left: 7px;
    background: linear-gradient(#fff, #e8ecf8 40%, #d4dbef 45%, #e2e8f6);
    white-space: nowrap;
}

/* Toolbars */
.toolbar {
    display: flex;
    flex: none;
    height: 30px;
    border-top: 1px solid var(--line);
    box-shadow: inset 0 1px #fff;
    overflow: hidden;
}

.toolbar.first {
    height: 31px;
    padding-left: 7px;
    border-top-width: 2px;
}

.group {
    display: flex;
    align-items: center;
    flex: none;
    padding-right: 4px;
    border-right: 1px solid var(--line);
}

.toolbar .group:first-child {
    border-left: 1px solid #d0d0d0;
}

.group::before {
    content: "";
    width: 2px;
    height: 18px;
    margin: 0 4px;
    background: repeating-linear-gradient(#c0c0c0 0 2px, transparent 2px 4px);
}

.tool {
    display: flex;
    align-items: center;
    justify-content: center;
    flex: none;
    width: 23px;
    height: 22px;
}

.tool svg {
    width: 16px;
    height: 16px;
}

.tool.more {
    width: 40px;
    gap: 8px;
}

.more::after,
.drop.dark {
    content: "";
    border: 4px solid transparent;
    border-top-color: #222;
    border-bottom: none;
}

.sep {
    width: 1px;
    height: 18px;
    margin: 0 4px 0 3px;
    background: #888;
}

/* Yellow ribbon */
.ribbon {
    display: flex;
    flex: none;
    height: 31px;
    border-top: 1px solid var(--line);
    border-bottom: 3px double var(--line);
    overflow: hidden;
}

.ribbon-part {
    display: flex;
    align-items: center;
    flex: none;
    background: var(--ribbon);
    border-right: 1px solid var(--line);
}

.coords {
    gap: 13px;
    padding: 0 9px 0 4px;
}

.select {
    gap: 8px;
    margin-left: 2px;
    padding: 0 9px 0 4px;
}

.select::before {
    content: "";
    width: 1px;
    height: 20px;
    background: #999;
}

.coord {
    display: flex;
    gap: 5px;
}

.key,
.word,
.mini {
    display: flex;
    align-items: center;
    justify-content: center;
    border: 1px solid #808080;
    border-radius: 3px;
    background: linear-gradient(#f6f6f6, #e0e0e0);
}

.key {
    width: 21px;
    height: 20px;
    font: 12px "Liberation Mono", monospace;
    text-decoration: underline;
}

.key svg,
.flat svg {
    width: 18px;
    height: 18px;
}

.combo {
    display: flex;
    align-items: center;
    width: 72px;
    height: 20px;
    padding: 2px;
    border: 1px solid #abadb3;
    border-radius: 2px;
    background: #fff;
}

.combo input {
    width: 50px;
    height: 14px;
    border: none;
    background: var(--face);
    font: 10px "DejaVu Sans Mono", monospace;
}

.drop {
    display: block;
    border: 4px solid transparent;
    border-top-color: #aaa;
    border-bottom: none;
}

.combo .drop {
    margin: 0 auto;
}

.quick {
    display: flex;
    align-items: center;
}

.coords .quick {
    margin-left: -8px;
}

.select .quick {
    margin-left: -2px;
}

.flat {
    display: flex;
    align-items: center;
    justify-content: center;
    width: 24px;
    height: 20px;
    background: var(--face);
    border-right: 1px solid #ddd;
}

.flat.thin {
    width: 14px;
    margin-right: 4px;
    border: 1px solid #ccc;
}

.flat.more {
    width: 42px;
    gap: 5px;
}

.flat.more::after {
    border-width: 3px;
    border-bottom: none;
}

.ribbon .word {
    width: 46px;
    height: 20px;
}

.ribbon select {
    width: 72px;
    height: 20px;
    border: 1px solid #707070;
    border-radius: 2px;
    background: linear-gradient(#f4f4f4, #ddd);
    font: 12px var(--ui);
}

.spacer-bar {
    flex: none;
    height: 29px;
    border-bottom: 1px solid var(--line);
}

/* Workspace */
.workspace {
    position: relative;
    display: flex;
    flex: 1;
    min-height: 0;
}

.side {
    flex: none;
    width: 47px;
    background: #d3daed;
    border-right: 1px solid #888;
}

.side-tools {
    padding: 5px 5px 4px 2px;
    background: var(--face);
    border-bottom: 1px solid var(--line);
}

.side-tools::before {
    content: "";
    display: block;
    height: 2px;
    margin: 0 0 5px 3px;
    background: repeating-linear-gradient(90deg, #c0c0c0 0 2px, transparent 2px 4px);
}

.side-tools hr {
    height: 1px;
    margin: 3px 0 4px 3px;
    border: none;
    background: #999;
}

.tool.end::after {
    content: "";
    width: 1px;
    height: 18px;
    margin: 0 -7px 0 6px;
    background: #999;
}

.manager {
    display: flex;
    flex-direction: column;
    flex: none;
    width: 387px;
    border-right: 2px solid #808080;
}

.manager-title {
    display: flex;
    align-items: center;
    gap: 6px;
    height: 18px;
    padding: 0 4px;
    background: #b3b3b3;
}

.manager-title h2 {
    flex: 1;
    font-size: 11px;
    font-weight: normal;
}

.mini {
    width: 17px;
    height: 17px;
    font: 12px/12px "Liberation Mono", monospace;
}

.tabs {
    display: flex;
    align-items: flex-end;
    height: 21px;
    border-bottom: 1px solid #8c8e94;
}

.tab {
    height: 18px;
    padding: 0 3px;
    border: 1px solid #8c8e94;
    border-bottom: none;
    background: linear-gradient(#f2f2f2, #d8d8d8);
}

.tab.active {
    width: 51px;
    height: 21px;
    padding: 0 6px;
    margin-bottom: -1px;
    background: #fff;
    text-align: left;
}

.manager-tools {
    margin: 2px 3px 0 2px;
    color: var(--grey);
}

.line {
    display: flex;
    align-items: center;
    width: 336px;
    height: 31px;
    padding-left: 5px;
    border-top: 1px solid var(--line);
}

.line .sep {
    margin: 0 3px 0 2px;
}

.line .end::after {
    margin: 0 -1px 0 0;
}

.tool.g1 {
    font: bold 13px "Liberation Serif", serif;
}

/* Operations tree */
.tree-box {
    display: flex;
    flex-direction: column;
    flex: 1;
    margin: 6px 4px 4px;
    border: 1px solid #828790;
    background: #fff;
    overflow: hidden;
}

.tree {
    flex: 1;
    padding: 2px 0 0 3px;
    font-family: "Noto Sans", "Noto Sans CJK SC", sans-serif;
    font-size: 14px;
    overflow: hidden;
    white-space: nowrap;
}

.tree,
.tree ul {
    list-style: none;
}

.tree ul {
    padding-left: 19px;
}

.tree li {
    position: relative;
}

.tree ul > li::before {
    content: "";
    position: absolute;
    top: 0;
    bottom: 0;
    left: 9px;
    border-left: 1px dotted #555;
}

.tree ul > li:last-child::before {
    bottom: auto;
    height: 11px;
}

.node {
    position: relative;
    display: flex;
    align-items: center;
    height: 22px;
    padding-left: 20px;
}

.node::before {
    content: "";
    position: absolute;
    top: 11px;
    left: 9px;
    width: 10px;
    border-top: 1px dotted #555;
}

.node svg {
    flex: none;
    width: 16px;
    height: 16px;
}

.node span {
    margin-left: 3px;
    padding-left: 2px;
    line-height: 22px;
}

.node.selected span {
    flex: 1;
    background: var(--select);
    color: #fff;
}

.exp {
    position: absolute;
    top: 7px;
    left: 5px;
    width: 9px;
    height: 9px;
    border: 1px solid #919191;
    background: linear-gradient(#4b63a7, #4b63a7) center / 5px 1px no-repeat, #f8f8f8;
}

.exp.plus {
    background: linear-gradient(#4b63a7, #4b63a7) center / 5px 1px no-repeat, linear-gradient(#4b63a7, #4b63a7) center / 1px 5px no-repeat, #f8f8f8;
}

.scroll {
    display: flex;
    align-items: center;
    height: 17px;
    margin: 0 1px 2px;
    background: #ececec;
}

.scroll-arrow {
    width: 18px;
    height: 17px;
}

.scroll-arrow::before {
    content: "";
    display: block;
    width: 4px;
    margin: 0 auto;
    border: 4px solid transparent;
}

.scroll-arrow.left::before {
    border-left: none;
    border-right-color: #333;
}

.scroll-arrow.right::before {
    border-right: none;
    border-left-color: #333;
}

.track {
    flex: 1;
}

.thumb {
    width: 75%;
    height: 15px;
    border: 1px solid #959595;
    border-radius: 2px;
    background: repeating-linear-gradient(90deg, #777 0 2px, transparent 2px 3px) center / 8px 7px no-repeat, linear-gradient(#f4f4f4, #e6e6e6 50%, #d0d0d0 50%, #dcdcdc);
}

/* Graphics area */
.viewport {
    position: relative;
    flex: 1;
    min-width: 0;
    background: linear-gradient(#fff, #9966ff);
    overflow: hidden;
}

.scene {
    display: block;
    width: 100%;
}

.axis {
    font: bold 12px "DejaVu Sans", sans-serif;
}

.view-info {
    position: absolute;
    bottom: 9px;
    left: 7px;
    display: flex;
    gap: 12px;
    color: #c0c0c0;
    font-weight: bold;
    white-space: nowrap;
}

.note {
    position: absolute;
    top: 0;
    left: 0;
    width: 100%;
    pointer-events: none;
}

.note text {
    fill: #ed1c24;
    font: bold 21px "Open Sans", "Noto Sans CJK SC", sans-serif;
}

/* Status bar */
.status {
    position: relative;
    display: flex;
    align-items: center;
    justify-content: flex-end;
    flex: none;
    gap: 6px;
    height: 28px;
    border-top: 4px double var(--line);
    border-bottom: 1px solid #444;
    background: #f0edec;
}

.status .word {
    width: 26px;
    height: 19px;
    white-space: nowrap;
}

.status .wide {
    width: 66px;
}

.status label {
    height: 19px;
    padding: 1px;
    border: 1px solid #aaa;
    border-right: none;
    border-radius: 3px 0 0 3px;
    white-space: nowrap;
}

.status input {
    height: 22px;
    border: 1px solid #abadb3;
    background: #fff;
    font: 12px var(--ui);
}

.depth {
    width: 15px;
}

.status #depth {
    width: 97px;
    margin-left: -6px;
    padding-left: 3px;
    background: linear-gradient(90deg, #fff 2px, var(--select) 2px 34px, #ffff80 34px 78px, #fff 78px);
    color: #fff;
}

.swatch {
    width: 40px;
    height: 17px;
    background: #00f;
}

.status .swatch + .mini {
    width: 15px;
    margin-left: -6px;
}

.level {
    width: 31px;
}

.status #level {
    width: 103px;
    margin-left: -6px;
    padding-left: 4px;
}

.watermark {
    position: absolute;
    right: 20px;
    color: #fff;
    font: bold 16px "DejaVu Sans", "Noto Sans CJK SC", sans-serif;
    -webkit-text-stroke: 2px #e83030;
    paint-order: stroke fill;
}

.taskbar {
    display: flex;
    flex: none;
    gap: 2px;
    height: 2px;
    padding-left: 120px;
    background: linear-gradient(90deg, #7898b8, #b8d0e8 12%, #a8c4e0);
}

.taskbar span {
    width: 59px;
    background: #e8f0f8;
}
```
